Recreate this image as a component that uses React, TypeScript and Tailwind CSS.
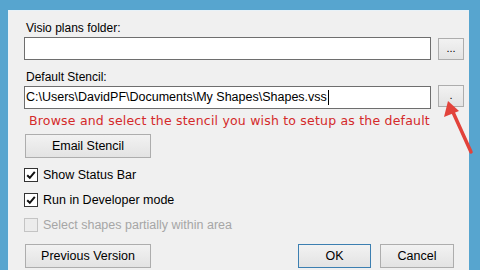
import React from "react";

const Check = ({ checked, disabled }: { checked?: boolean; disabled?: boolean }) => (
  <div
    className={
      "w-[14px] h-[14px] border flex items-center justify-center " +
      (disabled ? "border-[#c4c4c4] bg-[#ececec]" : "border-[#333333] bg-white")
    }
  >
    {checked && (
      <svg width="10" height="10" viewBox="0 0 10 10">
        <path d="M1.2 5.2 L3.8 7.8 L8.8 1.8" fill="none" stroke="#111" strokeWidth="2" />
      </svg>
    )}
  </div>
);

const Btn = ({ children, w, primary }: { children: React.ReactNode; w: string; primary?: boolean }) => (
  <div
    className={
      "h-[24px] flex items-center justify-center border bg-gradient-to-b from-[#f2f2f2] to-[#e3e3e3] text-[12.5px] text-black " +
      w +
      (primary ? " border-[#3c7fb1]" : " border-[#adadad]")
    }
  >
    {children}
  </div>
);

export default function App() {
  return (
    <div
      className="relative w-[480px] h-[270px] overflow-hidden bg-[#57a5cf] pl-[8px] pt-[10px] pr-[11px]"
      style={{ fontFamily: '"Liberation Sans", Arial, sans-serif' }}
    >
      <div className="h-[270px] bg-[#f0f0f0] border-t border-l border-[#e8f2f8] pl-[15px] pr-[4px]">
        <div className="pt-[10px] text-[12px] leading-[14px] text-black pl-[2px]">Visio plans folder:</div>
        <div className="mt-[2px] flex items-start gap-[7px]">
          <div className="w-[407px] h-[23px] bg-white border border-[#6e6e6e]" />
          <div className="mt-[1px] w-[26px] h-[22px] border border-[#adadad] bg-gradient-to-b from-[#f2f2f2] to-[#e3e3e3] flex items-center justify-center text-[11px] leading-none pb-[2px]">
            ...
          </div>
        </div>
        <div className="mt-[10px] text-[12px] leading-[14px] text-black pl-[2px]">Default Stencil:</div>
        <div className="mt-[2px] flex items-start gap-[7px]">
          <div className="w-[407px] h-[23px] bg-white border border-[#6e6e6e] flex items-center pl-[1px] text-[12.5px] text-black">
            <span>C:\Users\DavidPF\Documents\My Shapes\Shapes.vss</span>
            <span className="w-[1px] h-[15px] bg-black ml-[1px]" />
          </div>
          <div className="-mt-[1px] w-[26px] h-[22px] border border-[#adadad] bg-gradient-to-b from-[#f2f2f2] to-[#e3e3e3] flex items-center justify-center text-[11px] leading-none pb-[2px]">
            .
          </div>
        </div>
        <div
          className="mt-[4px] pl-[5px] text-[12.5px] leading-[16px] text-[#d42a2a] tracking-[0.2px]"
          style={{ fontFamily: '"DejaVu Sans", Verdana, sans-serif' }}
        >
          Browse and select the stencil you wish to setup as the default
        </div>
        <div className="mt-[5px] pl-[1px]">
          <Btn w="w-[126px]">Email Stencil</Btn>
        </div>
        <div className="mt-[9px] flex items-center gap-[5px] text-[12.5px] leading-[16px] text-black">
          <Check checked />
          <span>Show Status Bar</span>
        </div>
        <div className="mt-[9px] flex items-center gap-[5px] text-[12.5px] leading-[16px] text-black">
          <Check checked />
          <span>Run in Developer mode</span>
        </div>
        <div className="mt-[9px] flex items-center gap-[5px] text-[12.5px] leading-[16px] text-[#a6a6a6]">
          <Check disabled />
          <span>Select shapes partially within area</span>
        </div>
        <div className="mt-[11px] flex items-start pl-[1px]">
          <Btn w="w-[126px]">Previous Version</Btn>
          <div className="ml-[147px]">
            <Btn w="w-[73px]" primary>
              OK
            </Btn>
          </div>
          <div className="ml-[9px]">
            <Btn w="w-[74px]">Cancel</Btn>
          </div>
        </div>
      </div>
      <svg className="absolute left-0 top-0" width="480" height="270" viewBox="0 0 480 270">
        <line x1="471" y1="152" x2="452" y2="110" stroke="#e2433b" strokeWidth="3.5" strokeLinecap="round" />
        <polygon points="448,101 444,117 459,111" fill="#e2433b" />
      </svg>
    </div>
  );
}
